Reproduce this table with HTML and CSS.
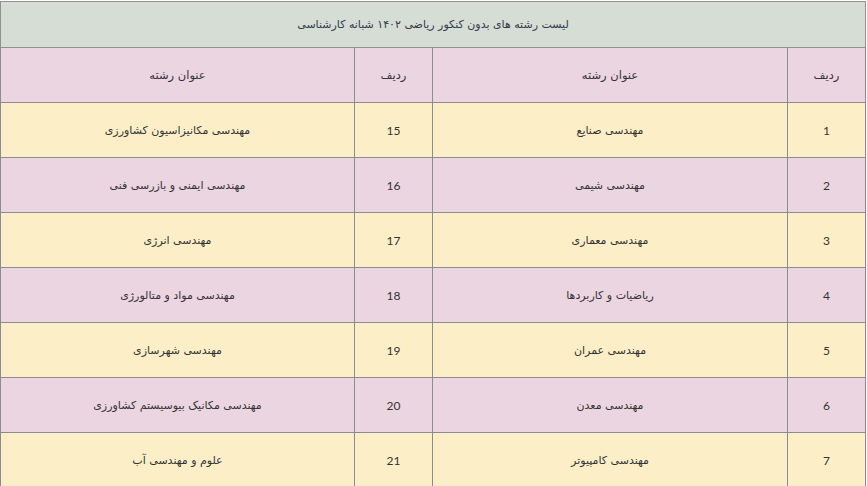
FILE: index.html
```html
<!DOCTYPE html>
<html lang="fa" dir="rtl">
<head>
<meta charset="utf-8">
<link rel="stylesheet" href="styles.css">
</head>
<body>
<table class="majors">
  <colgroup>
    <col class="c-num"><col class="c-title"><col class="c-num2"><col class="c-title2">
  </colgroup>
  <thead>
    <tr class="caption-row"><th colspan="4">لیست رشته های بدون کنکور ریاضی ۱۴۰۲ شبانه کارشناسی</th></tr>
    <tr class="head-row"><th>ردیف</th><th>عنوان رشته</th><th>ردیف</th><th>عنوان رشته</th></tr>
  </thead>
  <tbody>
    <tr class="odd"><td class="num">1</td><td>مهندسی صنایع</td><td class="num">15</td><td>مهندسی مکانیزاسیون کشاورزی</td></tr>
    <tr class="even"><td class="num">2</td><td>مهندسی شیمی</td><td class="num">16</td><td>مهندسی ایمنی و بازرسی فنی</td></tr>
    <tr class="odd"><td class="num">3</td><td>مهندسی معماری</td><td class="num">17</td><td>مهندسی انرژی</td></tr>
    <tr class="even"><td class="num">4</td><td>ریاضیات و کاربردها</td><td class="num">18</td><td>مهندسی مواد و متالورژی</td></tr>
    <tr class="odd"><td class="num">5</td><td>مهندسی عمران</td><td class="num">19</td><td>مهندسی شهرسازی</td></tr>
    <tr class="even"><td class="num">6</td><td>مهندسی معدن</td><td class="num">20</td><td>مهندسی مکانیک بیوسیستم کشاورزی</td></tr>
    <tr class="odd"><td class="num">7</td><td>مهندسی کامپیوتر</td><td class="num">21</td><td>علوم و مهندسی آب</td></tr>
  </tbody>
</table>
</body>
</html>
```

FILE: styles.css
```css
html, body {
  margin: 0;
  padding: 0;
  background: #ffffff;
}
body {
  padding: 1px 1px 0 2px;
  overflow: hidden;
}
.majors {
  width: 865px;
  border-collapse: collapse;
  table-layout: fixed;
  font-family: "DejaVu Sans", "Noto Sans", sans-serif;
  font-size: 11px;
  color: #333333;
}
.c-num, .c-num2 { width: 78px; }
.c-title { width: 355px; }
.c-title2 { width: 354px; }
.majors th, .majors td {
  border: 1px solid #8c8a92;
  text-align: center;
  vertical-align: middle;
  font-weight: normal;
  padding: 0;
}
.caption-row th {
  height: 45px;
  background: #d5ddd5;
  color: #2f3a4a;
  border-color: #8d9490;
}
.head-row th {
  height: 54px;
  background: #ebd5e1;
  font-size: 11.5px;
}
.odd td {
  height: 54px;
  background: #fcefc8;
}
.even td {
  height: 54px;
  background: #ebd5e1;
}
.num {
  font-family: "Lato", "Liberation Sans", sans-serif;
  font-size: 12px;
}
```
